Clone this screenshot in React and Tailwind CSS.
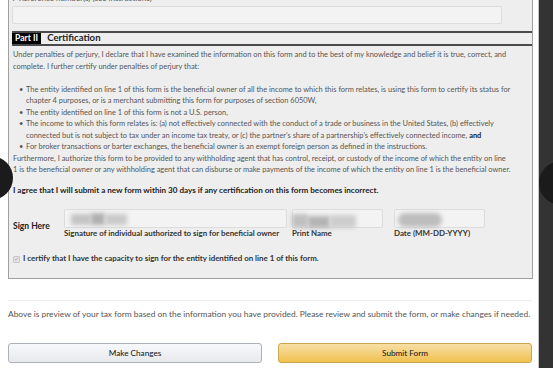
import React from 'react'

const bullets = [
  <>The entity identified on line 1 of this form is the beneficial owner of all the income to which this form relates, is using this form to certify its status for chapter 4 purposes, or is a merchant submitting this form for purposes of section 6050W,</>,
  <>The entity identified on line 1 of this form is not a U.S. person,</>,
  <>The income to which this form relates is: (a) not effectively connected with the conduct of a trade or business in the United States, (b) effectively connected but is not subject to tax under an income tax treaty, or (c) the partner's share of a partnership's effectively connected income, <b className="text-[#222]">and</b></>,
  <>For broker transactions or barter exchanges, the beneficial owner is an exempt foreign person as defined in the instructions.</>,
]

// blurred field values
const Smudge = ({ className }) => (
  <div className={`absolute blur-[2px] ${className}`} />
)

const App = () => {
  return (
    <div className="relative w-[553px] h-[368px] overflow-hidden bg-white flex font-['Lato','Liberation_Sans',sans-serif] text-[#555]">
      <div className="w-[538px] pl-2 pr-[5px] flex flex-col">
        {/* form panel */}
        <div className="border-l border-r border-b border-[#a0a0a0] bg-[#eeeeee] pl-[3px] pb-[14px]">
          <div className="mt-[-7px] text-[8px] leading-[10px] text-[#555]">7 Reference number(s) (see instructions)</div>
          <div className="mt-[3px] w-[490px] h-[18px] bg-[#f3f3f3] border border-[#dcdcdc] rounded-[2px]" />

          {/* Part II header */}
          <div className="mt-[7px] border-t-2 border-b-2 border-[#4a4a4a] h-[15px] flex items-center">
            <span className="bg-black text-white font-bold text-[8.6px] leading-[11px] px-[3px] h-[11px]">Part II</span>
            <span className="ml-[6px] font-bold text-[9.6px] text-[#222]">Certification</span>
          </div>

          {/* body */}
          <div className="mt-[3px] pr-[9px] pl-[1px] text-[7.45px] leading-[11.5px]">
            <p>Under penalties of perjury, I declare that I have examined the information on this form and to the best of my knowledge and belief it is true, correct, and complete. I further certify under penalties of perjury that:</p>
            <ul className="mt-[11.5px]">
              {bullets.map((b, i) => (
                <li key={i} className="flex">
                  <span className="w-[13px] shrink-0 pl-[6px]">•</span>
                  <span>{b}</span>
                </li>
              ))}
            </ul>
            <p>Furthermore, I authorize this form to be provided to any withholding agent that has control, receipt, or custody of the income of which the entity on line<br />1 is the beneficial owner or any withholding agent that can disburse or make payments of the income of which the entity on line 1 is the beneficial owner.</p>
            <p className="mt-[9px] font-bold text-[#222] text-[8.1px]">I agree that I will submit a new form within 30 days if any certification on this form becomes incorrect.</p>
          </div>

          {/* sign row */}
          <div className="mt-[13px] flex pl-[1px]">
            <div className="w-[51px] pt-[11px] font-bold text-[8.5px] text-[#222]">Sign Here</div>
            <div className="w-[223px]">
              <div className="relative h-[19px] bg-[#f3f3f3] border border-[#dcdcdc] rounded-[2px]">
                <Smudge className="left-[6px] top-[4px] w-[20px] h-[11px] bg-[#c4c4c4]" />
                <Smudge className="left-[26px] top-[3px] w-[14px] h-[12px] bg-[#b0b0b0]" />
                <Smudge className="left-[40px] top-[4px] w-[22px] h-[11px] bg-[#cacaca]" />
              </div>
              <div className="mt-[1px] font-bold text-[7.9px] leading-[9px] text-[#333] whitespace-nowrap">Signature of individual authorized to sign for beneficial owner</div>
            </div>
            <div className="ml-[5px] w-[91px]">
              <div className="relative h-[19px] bg-[#f3f3f3] border border-[#dcdcdc] rounded-[2px]" />
              <div className="mt-[1px] font-bold text-[7.9px] leading-[9px] text-[#333]">Print Name</div>
            </div>
            <div className="ml-[11px] w-[91px]">
              <div className="relative h-[19px] bg-[#f3f3f3] border border-[#dcdcdc] rounded-[2px]">
                <Smudge className="left-[3px] top-[3px] w-[44px] h-[14px] rounded-full bg-[#bdbdbd]" />
              </div>
              <div className="mt-[1px] font-bold text-[7.9px] leading-[9px] text-[#333]">Date (MM-DD-YYYY)</div>
            </div>
          </div>

          {/* capacity checkbox */}
          <div className="mt-[16px] flex items-center h-[10px] pl-[1px]">
            <span className="w-[7px] h-[7px] rounded-[1px] border border-[#c8c8c8] bg-[#e4e4e4] flex items-center justify-center">
              <svg viewBox="0 0 8 8" className="w-[6px] h-[6px]"><path d="M1.5 4.2 3.2 5.8 6.6 2" fill="none" stroke="#a8a8a8" strokeWidth="1.3" /></svg>
            </span>
            <span className="ml-[3px] font-bold text-[7.9px] text-[#333]">I certify that I have the capacity to sign for the entity identified on line 1 of this form.</span>
          </div>
        </div>

        <div className="mt-[21px] border-t border-[#ececec] w-[524px]" />
        <p className="mt-[8px] text-[8.4px] leading-[10px] text-[#555] whitespace-nowrap">Above is preview of your tax form based on the information you have provided. Please review and submit the form, or make changes if needed.</p>

        <div className="mt-[24px] flex gap-[16px] w-[524px]">
          <button className="flex-1 h-[20px] rounded-[3px] border border-[#adb1b8] bg-gradient-to-b from-[#f7f8fa] to-[#e7e9ec] text-[8.2px] text-[#111]">Make Changes</button>
          <button className="flex-1 h-[20px] rounded-[3px] border border-[#c9a74d] bg-gradient-to-b from-[#f7dfa5] to-[#f0c14b] text-[8.2px] text-[#111]">Submit Form</button>
        </div>
      </div>

      {/* dark backdrop strip on the right */}
      <div className="w-[15px] bg-[#333] border-l border-[#c4c4c4]" />

      {/* blurred print name (overlaps its label) */}
      <div className="absolute left-[292px] top-[214px] w-[70px] h-[18px]">
        <Smudge className="left-[0px] top-[0px] w-[16px] h-[14px] bg-[#c0c0c0]" />
        <Smudge className="left-[16px] top-[2px] w-[22px] h-[12px] bg-[#b4b4b4]" />
        <Smudge className="left-[38px] top-[1px] w-[26px] h-[13px] bg-[#cdcdcd]" />
      </div>

      {/* carousel nav circles */}
      <div className="absolute left-[-31px] top-[156px] w-[44px] h-[44px] rounded-full bg-[#1b1b1b]" />
      <div className="absolute left-[539px] top-[161px] w-[44px] h-[44px] rounded-full bg-[#1b1b1b]" />
    </div>
  )
}

export default App
